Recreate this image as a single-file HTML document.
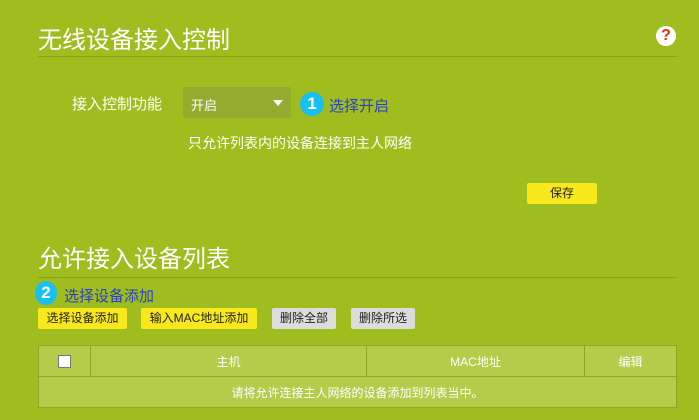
<!DOCTYPE html>
<html><head><meta charset="utf-8"><style>
body{margin:0;width:699px;height:420px;background:#9fbd1f;font-family:"Liberation Sans","Noto Sans CJK SC",sans-serif;color:#fff;position:relative;overflow:hidden}
.a{position:absolute;white-space:nowrap}
.t{font-size:24px;left:38px}
.line{position:absolute;left:38px;width:639px;height:1px;background:#8aa51b}
.btn{position:absolute;top:308px;height:21px;line-height:21px;font-size:12px;color:#222;text-align:center;border-radius:2px}
.y{background:#f8e81c}.g{background:#dcdcdc}
.c{position:absolute;border-radius:50%;background:#17c0f0;color:#fff;font-weight:bold;text-align:center}
table{position:absolute;left:38px;top:345px;width:639px;border-collapse:collapse;background:#b3cc4a;font-size:12px}
td{border:1px solid #8ca626;text-align:center;height:30px;padding:0}
</style></head><body>
<div class="a t" style="top:20px">无线设备接入控制</div>
<div class="line" style="top:56px"></div>
<div class="a" style="left:656px;top:26px;width:20px;height:20px;border-radius:50%;background:#fff;color:#e8300c;font-weight:bold;font-size:16px;text-align:center;line-height:20px">?</div>
<div class="a" style="left:72px;top:93px;font-size:15px">接入控制功能</div>
<div class="a" style="left:183px;top:87px;width:108px;height:31px;background:#93ab2e;border-radius:2px"></div>
<div class="a" style="left:191px;top:95px;font-size:13px">开启</div>
<div class="a" style="left:273px;top:100px;width:0;height:0;border-left:5px solid transparent;border-right:5px solid transparent;border-top:6px solid #fff"></div>
<div class="c" style="left:300px;top:92px;width:24px;height:24px;line-height:24px;font-size:17px">1</div>
<div class="a" style="left:329px;top:95px;font-size:15px;color:#2b3fc4">选择开启</div>
<div class="a" style="left:188px;top:133px;font-size:14px">只允许列表内的设备连接到主人网络</div>
<div class="btn y" style="left:527px;top:183px;width:70px">保存</div>
<div class="a t" style="top:239px">允许接入设备列表</div>
<div class="line" style="top:277px"></div>
<div class="c" style="left:35px;top:281px;width:22px;height:24px;line-height:24px;font-size:17px">2</div>
<div class="a" style="left:64px;top:285px;font-size:15px;color:#2b3fc4">选择设备添加</div>
<div class="btn y" style="left:38px;width:89px">选择设备添加</div>
<div class="btn y" style="left:141px;width:116px">输入MAC地址添加</div>
<div class="btn g" style="left:272px;width:64px">删除全部</div>
<div class="btn g" style="left:351px;width:64px">删除所选</div>
<table>
<tr><td style="width:51px"><div style="width:11px;height:11px;background:#fff;border:1px solid #777;margin:auto"></div></td><td style="width:275px">主机</td><td style="width:217px">MAC地址</td><td>编辑</td></tr>
<tr><td colspan="4">请将允许连接主人网络的设备添加到列表当中。</td></tr>
</table>
</body></html>
